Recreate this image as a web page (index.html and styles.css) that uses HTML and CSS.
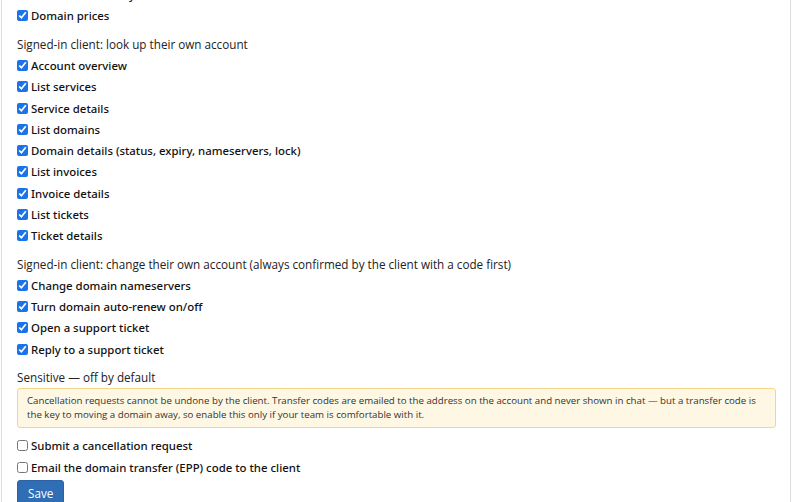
FILE: index.html
```html
<!DOCTYPE html>
<html lang="en">
<head>
<meta charset="utf-8">
<title>Assistant permissions</title>
<link rel="stylesheet" href="styles.css">
</head>
<body>
<div class="card">
  <div class="section first">
    <label class="opt"><input type="checkbox" checked> Domain availability</label>
    <label class="opt"><input type="checkbox" checked> Domain prices</label>
  </div>
  <div class="section">
    <div class="heading">Signed-in client: look up their own account</div>
    <label class="opt"><input type="checkbox" checked> Account overview</label>
    <label class="opt"><input type="checkbox" checked> List services</label>
    <label class="opt"><input type="checkbox" checked> Service details</label>
    <label class="opt"><input type="checkbox" checked> List domains</label>
    <label class="opt"><input type="checkbox" checked> Domain details (status, expiry, nameservers, lock)</label>
    <label class="opt"><input type="checkbox" checked> List invoices</label>
    <label class="opt"><input type="checkbox" checked> Invoice details</label>
    <label class="opt"><input type="checkbox" checked> List tickets</label>
    <label class="opt"><input type="checkbox" checked> Ticket details</label>
  </div>
  <div class="section">
    <div class="heading">Signed-in client: change their own account (always confirmed by the client with a code first)</div>
    <label class="opt"><input type="checkbox" checked> Change domain nameservers</label>
    <label class="opt"><input type="checkbox" checked> Turn domain auto-renew on/off</label>
    <label class="opt"><input type="checkbox" checked> Open a support ticket</label>
    <label class="opt"><input type="checkbox" checked> Reply to a support ticket</label>
  </div>
  <div class="section">
    <div class="heading">Sensitive — off by default</div>
    <div class="alert">Cancellation requests cannot be undone by the client. Transfer codes are emailed to the address on the account and never shown in chat — but a transfer code is the key to moving a domain away, so enable this only if your team is comfortable with it.</div>
    <div class="after-alert">
      <label class="opt"><input type="checkbox"> Submit a cancellation request</label>
      <label class="opt"><input type="checkbox"> Email the domain transfer (EPP) code to the client</label>
    </div>
    <button class="btn" type="button">Save</button>
  </div>
</div>
</body>
</html>
```

FILE: styles.css
```css
html, body {
  margin: 0;
  padding: 0;
  background: #fff;
}
body {
  font-family: "Open Sans", "Noto Sans", sans-serif;
  font-size: 11.7px;
  color: #2b2b2b;
  overflow: hidden;
}
.card {
  margin: -15.9px 2px 0 1px;
  border: 1px solid #dedede;
  border-top: 0;
  padding: 0 14px 20px 15px;
  min-height: 560px;
}
.section {
  margin-top: 7.5px;
}
.section.first {
  margin-top: 0;
}
.heading {
  line-height: 21px;
  font-weight: 400;
  color: #222;
}
.opt {
  display: flex;
  align-items: center;
  height: 21.25px;
  font-family: "Noto Sans", "Open Sans", sans-serif;
  font-size: 11.4px;
  font-weight: 500;
  color: #111;
  white-space: nowrap;
}
.opt input {
  width: 11px;
  height: 11px;
  margin: 0 3px 0 0;
  accent-color: #1a73e8;
  flex: none;
}
.alert {
  background: #fef7e4;
  border: 1px solid #f3d68a;
  border-radius: 3px;
  padding: 5px 9px;
  font-size: 9.7px;
  line-height: 14px;
  color: #333;
}
.after-alert {
  margin-top: 7px;
}
.btn {
  margin-top: 2px;
  font-family: inherit;
  font-size: 11.7px;
  color: #fff;
  background: #2f6db5;
  border: 1px solid #2a63a6;
  border-radius: 3px;
  padding: 4px 10px;
  line-height: 17px;
  height: 27px;
}
```
